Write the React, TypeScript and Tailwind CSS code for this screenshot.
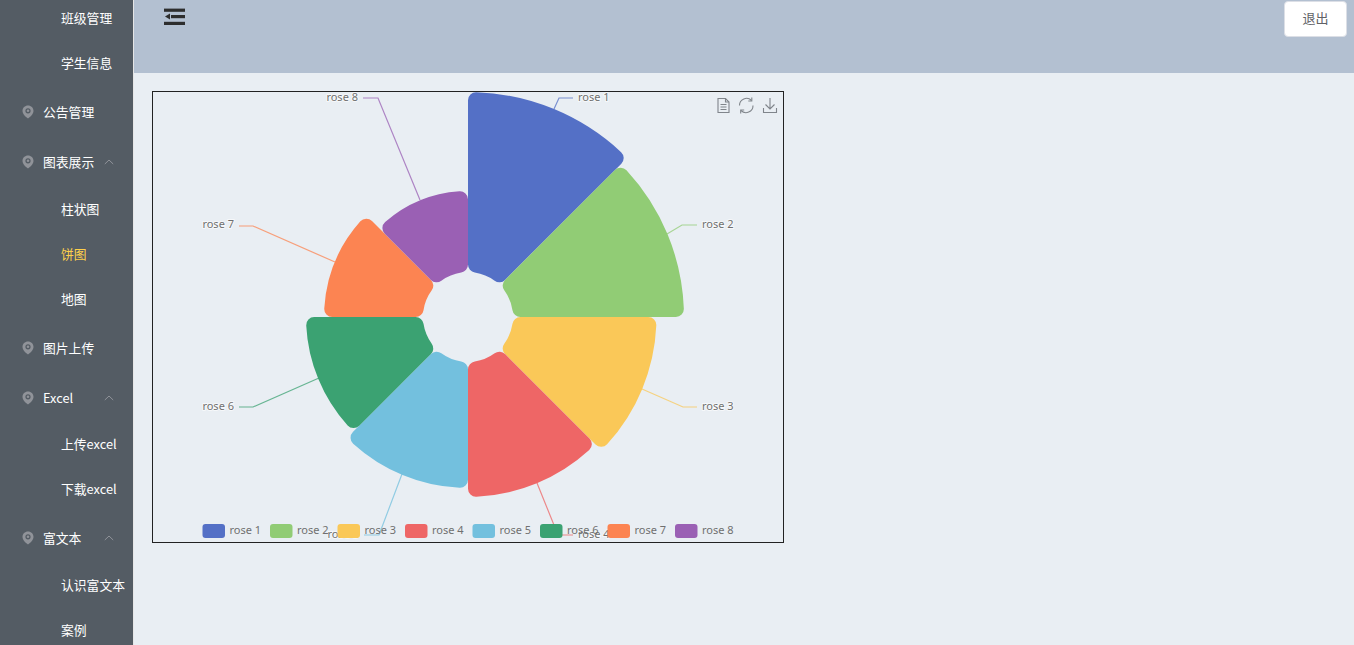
import React from "react";

const FONT = '"Noto Sans CJK SC", "Noto Sans", sans-serif';
const CX = 468;
const CY = 317;
const R0 = 45;
const CORNER = 8;

type Rose = {
  name: string;
  color: string;
  radius: number;
  line: string;
  labelX: number;
  labelY: number;
  anchor: "start" | "end";
};

const roses: Rose[] = [
  { name: "rose 1", color: "#5470c6", radius: 225, line: "554,109 559,98 573,98", labelX: 578, labelY: 97, anchor: "start" },
  { name: "rose 2", color: "#91cc75", radius: 216, line: "667,234 682,225 697,225", labelX: 702, labelY: 224, anchor: "start" },
  { name: "rose 3", color: "#fac858", radius: 188.5, line: "642,389 683,407 697,407", labelX: 702, labelY: 406, anchor: "start" },
  { name: "rose 4", color: "#ee6666", radius: 180, line: "537,483 558,535 573,535", labelX: 578, labelY: 534, anchor: "start" },
  { name: "rose 5", color: "#73c0de", radius: 171, line: "402,474 379,535 364,535", labelX: 359, labelY: 534, anchor: "end" },
  { name: "rose 6", color: "#3ba272", radius: 162, line: "319,378 253,407 239,407", labelX: 234, labelY: 406, anchor: "end" },
  { name: "rose 7", color: "#fc8452", radius: 144, line: "335,262 253,226 239,226", labelX: 234, labelY: 224, anchor: "end" },
  { name: "rose 8", color: "#9a60b4", radius: 126, line: "420,200 378,98 363,98", labelX: 358, labelY: 97, anchor: "end" },
];

const pt = (r: number, a: number) =>
  `${(CX + r * Math.sin(a)).toFixed(2)} ${(CY - r * Math.cos(a)).toFixed(2)}`;

const sectorPath = (r1: number, a0: number, a1: number) => {
  const c = CORNER;
  const dOut = Math.asin(c / (r1 - c));
  const eOut = Math.sqrt((r1 - c) ** 2 - c * c);
  const dIn = Math.asin(c / (R0 + c));
  const eIn = Math.sqrt((R0 + c) ** 2 - c * c);
  return [
    `M ${pt(eIn, a0)}`,
    `L ${pt(eOut, a0)}`,
    `A ${c} ${c} 0 0 1 ${pt(r1, a0 + dOut)}`,
    `A ${r1} ${r1} 0 0 1 ${pt(r1, a1 - dOut)}`,
    `A ${c} ${c} 0 0 1 ${pt(eOut, a1)}`,
    `L ${pt(eIn, a1)}`,
    `A ${c} ${c} 0 0 1 ${pt(R0, a1 - dIn)}`,
    `A ${R0} ${R0} 0 0 0 ${pt(R0, a0 + dIn)}`,
    `A ${c} ${c} 0 0 1 ${pt(eIn, a0)}`,
    "Z",
  ].join(" ");
};

const PinIcon = () => (
  <svg width="12" height="14" viewBox="0 0 12 14" className="shrink-0">
    <path
      fillRule="evenodd"
      d="M6 0.5C2.9 0.5 0.5 2.9 0.5 5.8C0.5 8.9 3.6 11.9 6 13.6C8.4 11.9 11.5 8.9 11.5 5.8C11.5 2.9 9.1 0.5 6 0.5ZM6 3.2A2.6 2.6 0 1 1 6 8.4A2.6 2.6 0 1 1 6 3.2Z"
      fill="#909399"
    />
    <circle cx="6" cy="5.8" r="1.3" fill="#909399" />
  </svg>
);

const ChevronIcon = () => (
  <svg width="10" height="6" viewBox="0 0 10 6" fill="none" className="shrink-0">
    <path d="M0.8 5L5 1L9.2 5" stroke="#909399" strokeWidth="1" />
  </svg>
);

const FoldIcon = () => (
  <svg width="22" height="18" viewBox="0 0 22 18">
    <rect x="0" y="0.6" width="21" height="3.2" fill="#2d2d2d" />
    <rect x="7" y="7" width="14" height="3.2" fill="#2d2d2d" />
    <path d="M1 8.6L6 5.6V11.6Z" fill="#2d2d2d" />
    <rect x="0" y="13.8" width="21" height="3.2" fill="#2d2d2d" />
  </svg>
);

type NavItem = { label: string; kind: "top" | "sub"; arrow?: boolean; active?: boolean; gap?: string };

const navItems: NavItem[] = [
  { label: "班级管理", kind: "sub" },
  { label: "学生信息", kind: "sub", gap: "mb-[2px]" },
  { label: "公告管理", kind: "top" },
  { label: "图表展示", kind: "top", arrow: true, gap: "-mb-[1px]" },
  { label: "柱状图", kind: "sub" },
  { label: "饼图", kind: "sub", active: true },
  { label: "地图", kind: "sub", gap: "mb-[2px]" },
  { label: "图片上传", kind: "top" },
  { label: "Excel", kind: "top", arrow: true, gap: "-mb-[2px]" },
  { label: "上传excel", kind: "sub" },
  { label: "下载excel", kind: "sub", gap: "mb-[2px]" },
  { label: "富文本", kind: "top", arrow: true, gap: "-mb-[1px]" },
  { label: "认识富文本", kind: "sub" },
  { label: "案例", kind: "sub" },
];

const Sidebar = () => (
  <aside className="w-[134px] shrink-0 h-full overflow-hidden bg-[#545c64] border-r border-[#e6e6e6]">
    <ul className="-mt-[5px] text-[12.8px] text-white">
      {navItems.map((item) =>
        item.kind === "top" ? (
          <li key={item.label} className={`h-[50px] flex items-center pl-[22px] pr-[19px] ${item.gap ?? ""}`}>
            <PinIcon />
            <span className="ml-[9px] whitespace-nowrap">{item.label}</span>
            {item.arrow && (
              <span className="ml-auto flex">
                <ChevronIcon />
              </span>
            )}
          </li>
        ) : (
          <li
            key={item.label}
            className={`h-[45px] flex items-center pl-[61px] whitespace-nowrap ${item.gap ?? ""} ${
              item.active ? "text-[#ffd04b]" : ""
            }`}
          >
            {item.label}
          </li>
        )
      )}
    </ul>
  </aside>
);

const RoseChart = () => (
  <svg width="630" height="450" viewBox="153 92 630 450" className="block" style={{ fontFamily: '"Noto Sans", sans-serif' }}>
    {roses.map((r) => (
      <polyline key={r.name} points={r.line} fill="none" stroke={r.color} strokeOpacity="0.75" strokeWidth="1.2" />
    ))}
    {roses.map((r, i) => (
      <path key={r.name} d={sectorPath(r.radius, (i * Math.PI) / 4, ((i + 1) * Math.PI) / 4)} fill={r.color} />
    ))}
    {roses.map((r) => (
      <text
        key={r.name}
        x={r.labelX}
        y={r.labelY + 4}
        textAnchor={r.anchor}
        fontSize="11"
        fill="#707070"
        stroke="#fff"
        strokeWidth="2"
        strokeOpacity="0.6"
        paintOrder="stroke"
      >
        {r.name}
      </text>
    ))}
    {roses.map((r, i) => (
      <g key={r.name}>
        <rect x={202.5 + i * 67.5} y="524" width="22.5" height="14" rx="3" fill={r.color} />
        <text x={229.5 + i * 67.5} y="534" fontSize="11" fill="#707070">
          {r.name}
        </text>
      </g>
    ))}
    {/* toolbox */}
    <g fill="none" stroke="#80858b" strokeWidth="1.1">
      <path d="M718 98.5H725.5L729 102V112.5H718Z" />
      <path d="M725.5 98.5V102H729M720.5 104.5H726.5M720.5 107H726.5M720.5 109.5H726.5" />
      <path d="M739.5 105.5A7 7 0 0 1 751.5 100.5M753 105.5A7 7 0 0 1 741 110.5" />
      <path d="M751.8 97.5V101H748.3M740.7 113.5V110H744.2" />
      <path d="M770 98V109M765.5 104.5L770 109L774.5 104.5M763.5 108V112.5H776.5V108" />
    </g>
  </svg>
);

export default function App() {
  return (
    <div className="flex h-screen overflow-hidden" style={{ fontFamily: FONT }}>
      <Sidebar />
      <div className="flex-1 flex flex-col min-w-0">
        <header className="h-[73px] shrink-0 bg-[#b3c0d1] flex items-start justify-between pl-[30px] pr-[7px]">
          <div className="pt-[8px]">
            <FoldIcon />
          </div>
          <button className="mt-px h-[36px] w-[63px] pb-[2px] bg-white border border-[#dcdfe6] rounded text-[13px] text-[#606266]">
            退出
          </button>
        </header>
        <main className="flex-1 bg-[#e9eef3] pl-[18px] pt-[18px]">
          <div className="w-[632px] h-[452px] border border-[#222]">
            <RoseChart />
          </div>
        </main>
      </div>
    </div>
  );
}
